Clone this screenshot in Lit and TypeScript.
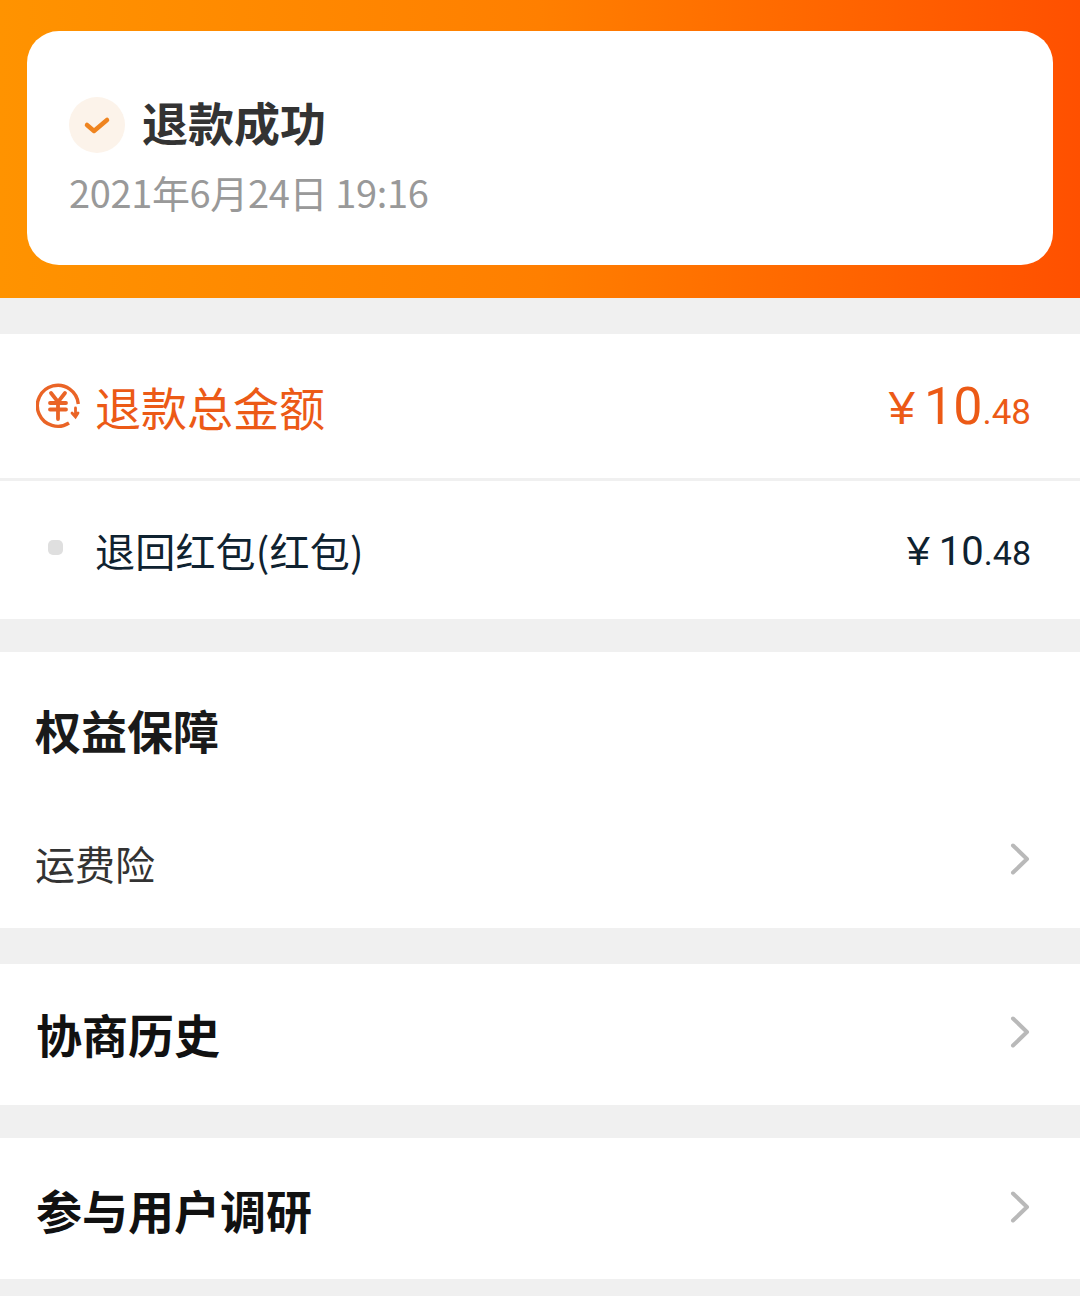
import { LitElement, html, css, svg } from "lit";
import { customElement } from "lit/decorators.js";

const chevron = html`<svg class="chev" width="24" height="36" viewBox="0 0 24 36"><path d="M4 4.5 L18 18 L4 31.5" fill="none" stroke="#b9b9b9" stroke-width="4" stroke-linecap="round" stroke-linejoin="round"/></svg>`;

@customElement("app-root")
export class AppRoot extends LitElement {
  static styles = css`
    :host { display: block; width: 1080px; height: 1296px; overflow: hidden; background: #f0f0f0;
      font-family: "Roboto", "Noto Sans CJK SC", sans-serif; }
    .head { height: 298px; box-sizing: border-box; padding: 31px 27px 33px;
      background: linear-gradient(90deg, #ff9300 0%, #ff7f00 50%, #ff5000 100%); }
    .card { height: 234px; box-sizing: border-box; background: #fff; border-radius: 32px; padding: 66px 42px 0; }
    .status { display: flex; align-items: center; gap: 17px; height: 56px; }
    .badge { width: 56px; height: 56px; border-radius: 50%; background: #fcf3ea; display: flex; align-items: center; justify-content: center; }
    .status h1 { margin: -8px 0 0; font-size: 46px; line-height: 56px; font-weight: 700; color: #333; font-family: "Noto Sans CJK SC", sans-serif; }
    .date { margin-top: 13px; font-size: 38px; line-height: 52px; color: #999; font-family: "Noto Sans CJK SC", sans-serif; font-weight: 400; letter-spacing: -0.35px; }
    .sec { background: #fff; }
    .s1 { margin-top: 36px; }
    .s2 { margin-top: 33px; }
    .s3 { margin-top: 36px; }
    .s4 { margin-top: 33px; }
    .row { display: flex; align-items: center; justify-content: space-between; }
    .left { display: flex; align-items: center; }
    .total { height: 144px; padding: 0 49px 0 36px; color: #ec5a16; border-bottom: 3px solid #f0f0f0; }
    .total .label { margin-left: 15px; font-size: 46px; font-family: "Noto Sans CJK SC", sans-serif; font-weight: 400; }
    .amount { display: flex; align-items: baseline; font-family: "Roboto", sans-serif; }
    .cur { font-family: "Liberation Sans", sans-serif; }
    .total .amount .cur { font-size: 47px; margin-right: 9px; }
    .total .amount .int { font-size: 52px; }
    .total .amount .dec { font-size: 35px; }
    .refund { height: 138px; padding: 0 49px 0 48px; color: #0f2230; }
    .refund .amount { position: relative; top: 1px; }
    .dot { width: 15px; height: 15px; border-radius: 5px; background: #dfdfdf; margin-right: 33px; position: relative; top: -3px; }
    .refund .label { font-size: 40px; letter-spacing: 0.2px; margin-left: -1px; font-family: "Noto Sans CJK SC", sans-serif; font-weight: 400; }
    .refund .amount .cur { font-size: 41px; margin-right: 9px; }
    .refund .amount .int { font-size: 40px; }
    .refund .amount .dec { font-size: 34px; }
    .s2 { height: 276px; padding: 0 49px 0 35px; }
    .s2 h2, .plain h2 { margin: 0; font-weight: 700; font-size: 46px; font-family: "Noto Sans CJK SC", sans-serif; }
    .s2 h2 { color: #1a1a1a; line-height: 60px; padding-top: 47px; }
    .ins { margin-top: 74px; font-size: 40px; color: #333; line-height: 60px; font-family: "Noto Sans CJK SC", sans-serif; font-weight: 400; }
    .ins .chev { position: relative; top: -4px; }
    .plain { height: 141px; padding: 0 49px 0 36px; }
    .plain h2 { color: #111; }
    .plain h2, .plain .chev { position: relative; top: -2px; }
    .s3 .chev { top: -3px; }
    .s4 h2 { top: 0; }
    .chev { display: block; margin-right: -2px; }
  `;

  render() {
    return html`
      <div class="head">
        <div class="card">
          <div class="status">
            <div class="badge">
              <svg width="28" height="24" viewBox="0 0 28 24"><path d="M4 12 L11 18 L24 7" fill="none" stroke="#ef8420" stroke-width="4.5" stroke-linecap="round" stroke-linejoin="round"/></svg>
            </div>
            <h1>退款成功</h1>
          </div>
          <div class="date">2021年6月24日 19:16</div>
        </div>
      </div>

      <div class="sec s1">
        <div class="row total">
          <div class="left">
            <svg width="44" height="46" viewBox="0 0 44 46">
              ${svg`<path d="M33 40 A20.5 20.5 0 1 1 42.3 21" fill="none" stroke="#ea6426" stroke-width="3.4"/>
              <path d="M39.5 25 L39.5 33 M36 30 L39.5 34 L42 30" fill="none" stroke="#ea6426" stroke-width="2.8" stroke-linecap="round"/>
              <path d="M15 10 L22 19 L29 10 M14 20 H30 M14 26.5 H30 M22 19 V36" fill="none" stroke="#ea6426" stroke-width="3.8" stroke-linecap="round"/>`}
            </svg>
            <span class="label">退款总金额</span>
          </div>
          <div class="amount"><span class="cur">¥</span><span class="int">10</span><span class="dec">.48</span></div>
        </div>
        <div class="row refund">
          <div class="left"><span class="dot"></span><span class="label">退回红包(红包)</span></div>
          <div class="amount"><span class="cur">¥</span><span class="int">10</span><span class="dec">.48</span></div>
        </div>
      </div>

      <div class="sec s2">
        <h2>权益保障</h2>
        <div class="row ins"><span>运费险</span>${chevron}</div>
      </div>

      <div class="sec s3 row plain"><h2>协商历史</h2>${chevron}</div>
      <div class="sec s4 row plain"><h2>参与用户调研</h2>${chevron}</div>
    `;
  }
}
